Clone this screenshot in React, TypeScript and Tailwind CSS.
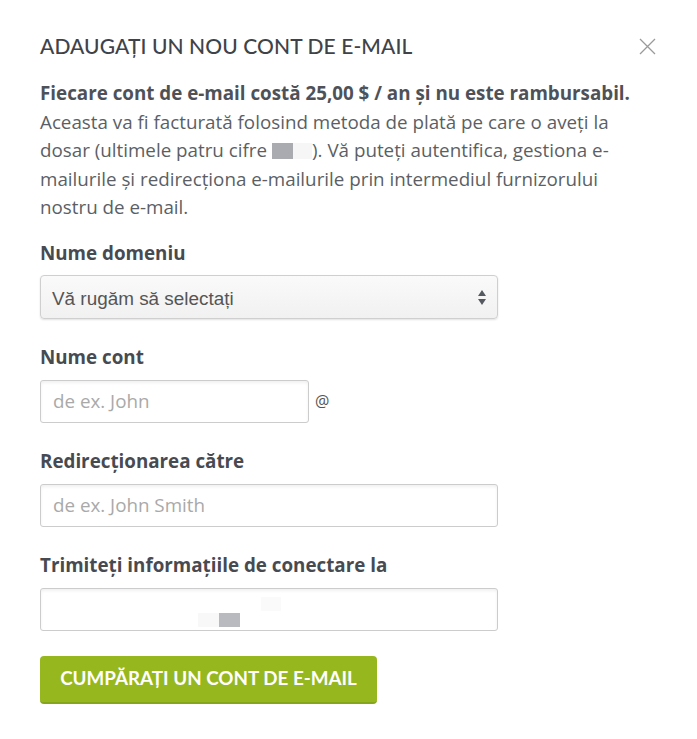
import React from 'react';

const bodyFont = { fontFamily: '"Open Sans", "Liberation Sans", sans-serif' };

const Field: React.FC<{ label: string; children: React.ReactNode }> = ({ label, children }) => (
  <div className="mt-[25px]">
    <label className="mb-[10px] block h-[26px] text-[18.8px] font-bold leading-[26px] text-[#474b51]">{label}</label>
    {children}
  </div>
);

const inputCls =
  'h-[43px] rounded-[3px] border border-[#cccccc] bg-white px-3 text-[18.8px] text-[#555] placeholder:text-[#a9a9a9] shadow-[inset_0_2px_3px_rgba(0,0,0,0.06)] outline-none';

const App: React.FC = () => {
  return (
    <div className="min-h-[739px] w-[697px] bg-white px-10 pt-[30px] text-[#51555b]" style={bodyFont}>
      <div className="flex h-[32px] items-center justify-between">
        <h2
          className="text-[21px] font-medium tracking-[0.1px] text-[#3f4349]"
          style={{ fontFamily: 'Lato, "Noto Sans", sans-serif' }}
        >
          ADAUGAȚI UN NOU CONT DE E-MAIL
        </h2>
        <button className="mr-[1px] flex h-[17px] w-[17px] items-center justify-center">
          <svg width="17" height="17" viewBox="0 0 17 17">
            <path d="M1 1 L16 16 M16 1 L1 16" stroke="#9a9a9a" strokeWidth="1.3" />
          </svg>
        </button>
      </div>

      <div className="mt-[17px] text-[18.8px] leading-[28.5px] text-[#5b5f65]">
        <p className="font-bold text-[#4e5258]">Fiecare cont de e-mail costă 25,00 $ / an și nu este rambursabil.</p>
        <p>
          Aceasta va fi facturată folosind metoda de plată pe care o aveți la dosar (ultimele patru cifre
          <span className="ml-[5px] inline-flex h-[16px] w-[40px] align-[-2px]">
            <span className="h-full w-[21px] bg-[#a9abb1]" />
            <span className="h-full w-[19px] bg-[#f6f6f7]" />
          </span>
          ). Vă puteți autentifica, gestiona e-mailurile și redirecționa e-mailurile prin intermediul furnizorului
          nostru de e-mail.
        </p>
      </div>

      <div className="mt-[18px]">
        <label className="mb-[9px] block h-[26px] text-[18.8px] font-bold leading-[26px] text-[#474b51]">Nume domeniu</label>
        <div className="relative h-[44px] w-[458px] rounded-[4px] border border-[#cfcfcf] bg-gradient-to-b from-[#fafafa] to-[#f1f1f1] shadow-[0_1px_2px_rgba(0,0,0,0.12)]">
          <span
            className="absolute left-[11px] top-[9px] text-[18.9px] text-[#555]"
            style={{ fontFamily: '"Liberation Sans", Arial, sans-serif' }}
          >
            Vă rugăm să selectați
          </span>
          <svg className="absolute right-[10px] top-[13px]" width="10" height="17" viewBox="0 0 10 17">
            <path d="M5 1 L9 7 H1 Z" fill="#555a60" />
            <path d="M5 16 L9 10 H1 Z" fill="#555a60" />
          </svg>
        </div>
      </div>

      <Field label="Nume cont">
        <div className="flex items-center">
          <input className={`${inputCls} w-[269px]`} placeholder="de ex. John" />
          <span className="ml-[6px] text-[16px] text-[#555]">@</span>
        </div>
      </Field>

      <Field label="Redirecționarea către">
        <input className={`${inputCls} block w-[458px]`} placeholder="de ex. John Smith" />
      </Field>

      <Field label="Trimiteți informațiile de conectare la">
        <div className={`${inputCls} relative w-[458px]`}>
          <span className="absolute left-[220px] top-[8px] h-[14px] w-[20px] bg-[#fafafa]" />
          <span className="absolute left-[157px] top-[24px] h-[14px] w-[21px] bg-[#f8f8f9]" />
          <span className="absolute left-[178px] top-[24px] h-[14px] w-[21px] bg-[#b9babf]" />
        </div>
      </Field>

      <button
        className="mt-[25px] h-[48px] w-[337px] rounded-[4px] border-b-2 border-[#85a61a] bg-[#96b81e] text-[18.8px] font-bold text-white"
        style={{ fontFamily: 'Lato, "Noto Sans", sans-serif' }}
      >
        CUMPĂRAȚI UN CONT DE E-MAIL
      </button>
    </div>
  );
};

export default App;
